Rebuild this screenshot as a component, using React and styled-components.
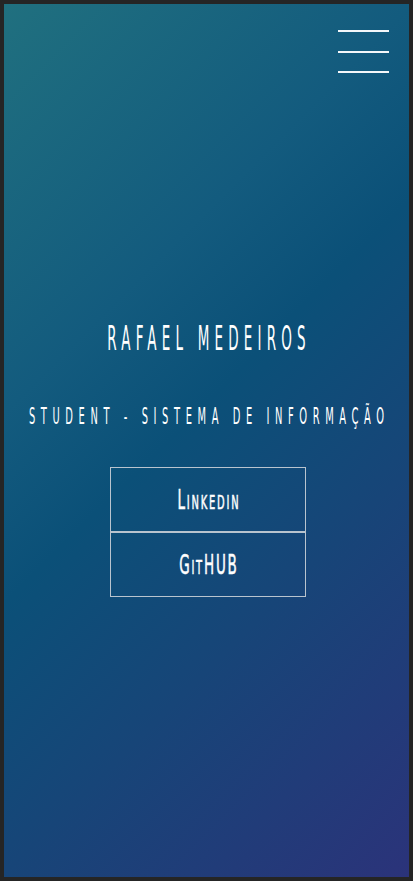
import React from "react";
import styled, { createGlobalStyle } from "styled-components";

const Global = createGlobalStyle`
  html, body { margin: 0; padding: 0; background: #252525; }
  body { font-family: "DejaVu Sans Condensed", "DejaVu Sans", sans-serif; }
  * { box-sizing: border-box; }
`;

const Page = styled.div`
  margin: 4px;
  height: 873px;
  background: linear-gradient(
    135deg,
    #20707f 0%,
    #135b7e 32%,
    #0b5078 47%,
    #174578 68%,
    #2b337a 100%
  );
  display: flex;
  flex-direction: column;
  color: #fff;
  font-family: "DejaVu Sans Condensed", "DejaVu Sans", sans-serif;
  font-stretch: condensed;
`;

const Nav = styled.nav`
  display: flex;
  justify-content: flex-end;
  padding: 26px 20px 0;
`;

const Burger = styled.button`
  width: 51px;
  height: 43px;
  padding: 0;
  border: 0;
  background: none;
  display: flex;
  flex-direction: column;
  justify-content: space-between;
  cursor: pointer;
`;

const Bar = styled.span`
  display: block;
  height: 2px;
  width: 100%;
  background: #f4f7fa;
`;

const Hero = styled.main`
  display: flex;
  flex-direction: column;
  align-items: center;
  padding-top: 260px;
`;

const Stretch = styled.span`
  display: inline-block;
  transform: scaleY(${(p) => p.$sy});
  transform-origin: center;
`;

const Title = styled.h1`
  margin: 0;
  height: 15px;
  font-size: 15px;
  line-height: 15px;
  font-weight: 400;
  letter-spacing: 5.2px;
  padding-left: 5.2px;
  white-space: nowrap;
`;

const Subtitle = styled.h2`
  margin: 63px 0 0;
  height: 11px;
  font-size: 11px;
  line-height: 11px;
  font-weight: 400;
  letter-spacing: 5.6px;
  padding-left: 5.6px;
  white-space: nowrap;
`;

const Links = styled.div`
  margin: 45px 0 0 3px;
  display: flex;
  flex-direction: column;
  width: 196px;
`;

const LinkButton = styled.a`
  display: flex;
  align-items: center;
  justify-content: center;
  height: 65px;
  border: 1px solid #b9c4ce;
  color: #fff;
  text-decoration: none;
  font-size: 15px;
  font-weight: 400;
  font-variant: small-caps;
  letter-spacing: 1.8px;
  padding-left: 1.8px;
  -webkit-text-stroke: 0.3px #fff;
`;

export default function App() {
  return (
    <>
      <Global />
      <Page>
        <Nav>
          <Burger aria-label="menu">
            <Bar />
            <Bar />
            <Bar />
          </Burger>
        </Nav>
        <Hero>
          <Title>
            <Stretch $sy={2.2}>RAFAEL MEDEIROS</Stretch>
          </Title>
          <Subtitle>
            <Stretch $sy={2.1}>STUDENT - SISTEMA DE INFORMAÇÃO</Stretch>
          </Subtitle>
          <Links>
            <LinkButton href="#">
              <Stretch $sy={1.8}>Linkedin</Stretch>
            </LinkButton>
            <LinkButton href="#">
              <Stretch $sy={1.8}>GitHUB</Stretch>
            </LinkButton>
          </Links>
        </Hero>
      </Page>
    </>
  );
}
